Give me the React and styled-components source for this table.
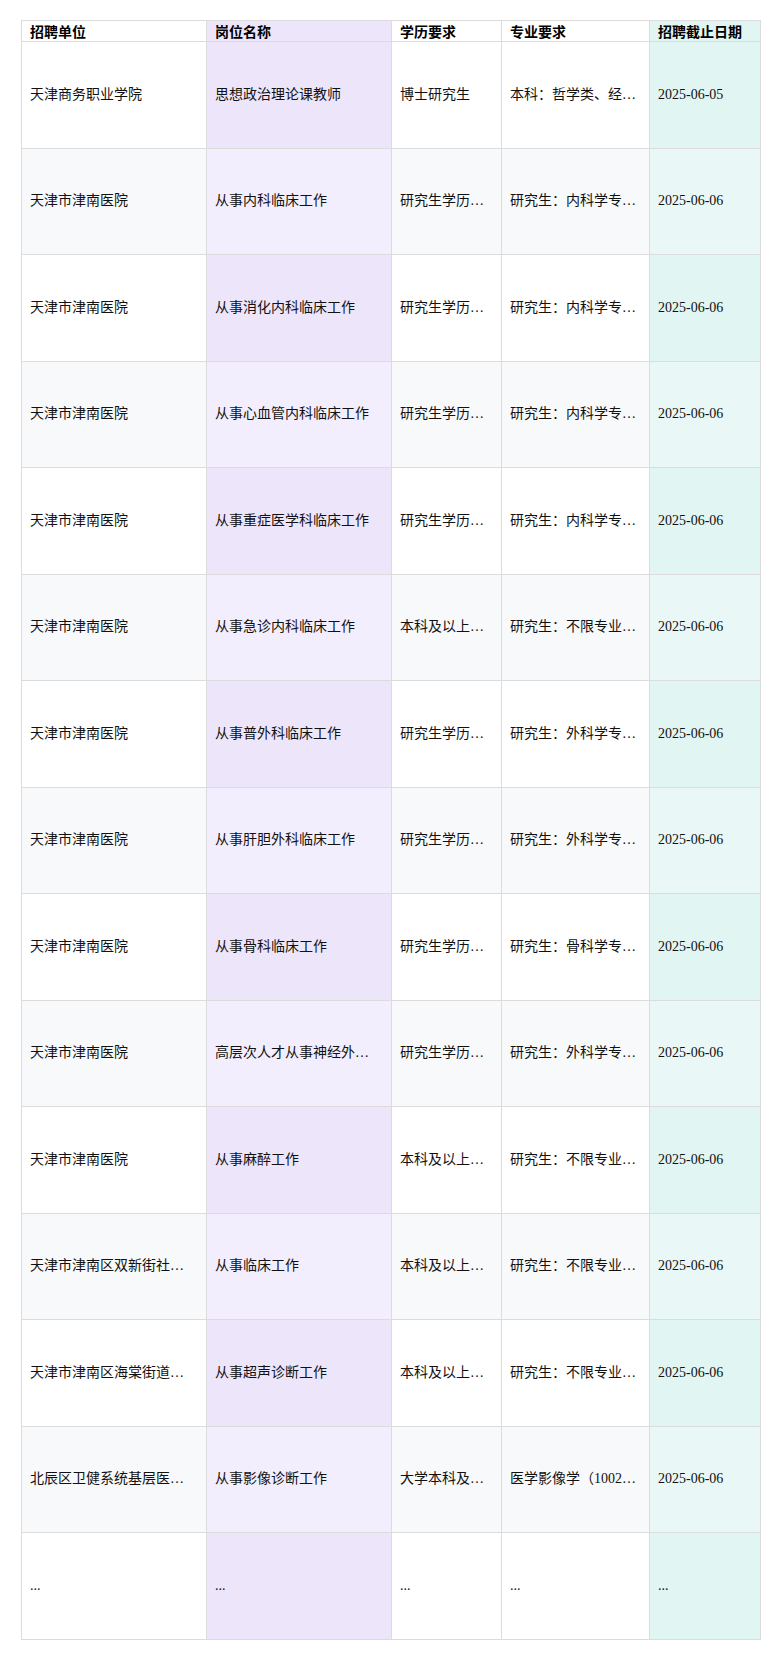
import styled, { createGlobalStyle } from "styled-components";

const GlobalStyle = createGlobalStyle`
  body {
    margin: 0;
    background: #ffffff;
    font-family: "Liberation Serif", "Noto Sans CJK SC", serif;
    color: #111;
  }
`;

const Page = styled.div`
  padding: 20px 20px 20px 21px;
`;

const Table = styled.table`
  width: 739px;
  table-layout: fixed;
  border-collapse: collapse;
  font-size: 14px;
  line-height: 20px;
`;

const stripe = {
  plain: ["#ffffff", "#f8f9fb"],
  job: ["#ede6fb", "#f3eefd"],
  date: ["#e1f5f2", "#e9f8f7"],
};

const HeadCell = styled.th`
  border: 1px solid #dcdcdc;
  padding: 0 8px;
  height: 20px;
  text-align: left;
  font-weight: bold;
  font-family: "Noto Sans CJK SC", sans-serif;
  color: #000;
  background: ${(p) => stripe[p.kind][0]};
`;

const Cell = styled.td`
  border: 1px solid #dcdcdc;
  padding: 0 12px 0 8px;
  height: 105.5px;
  vertical-align: middle;
  white-space: nowrap;
  overflow: hidden;
  text-overflow: ellipsis;
  background: ${(p) => stripe[p.kind][p.odd ? 1 : 0]};
`;

const columns = [
  { title: "招聘单位", width: 185, kind: "plain" },
  { title: "岗位名称", width: 185, kind: "job" },
  { title: "学历要求", width: 110, kind: "plain" },
  { title: "专业要求", width: 148, kind: "plain" },
  { title: "招聘截止日期", width: 111, kind: "date" },
];

const NANYUAN = "天津市津南医院";
const PG = "研究生学历，硕士及以上学位";
const BK = "本科及以上学历，学士及以上学位";

const rows = [
  ["天津商务职业学院", "思想政治理论课教师", "博士研究生", "本科：哲学类、经济学类；研究生：马克思主义理论", "2025-06-05"],
  [NANYUAN, "从事内科临床工作", PG, "研究生：内科学专业（呼吸、肾内方向）", "2025-06-06"],
  [NANYUAN, "从事消化内科临床工作", PG, "研究生：内科学专业（消化方向）", "2025-06-06"],
  [NANYUAN, "从事心血管内科临床工作", PG, "研究生：内科学专业（心血管方向）", "2025-06-06"],
  [NANYUAN, "从事重症医学科临床工作", PG, "研究生：内科学专业、重症医学", "2025-06-06"],
  [NANYUAN, "从事急诊内科临床工作", BK, "研究生：不限专业；本科：临床医学", "2025-06-06"],
  [NANYUAN, "从事普外科临床工作", PG, "研究生：外科学专业（普外方向）", "2025-06-06"],
  [NANYUAN, "从事肝胆外科临床工作", PG, "研究生：外科学专业（肝胆方向）", "2025-06-06"],
  [NANYUAN, "从事骨科临床工作", PG, "研究生：骨科学专业（骨科方向）", "2025-06-06"],
  [NANYUAN, "高层次人才从事神经外科临床工作", PG, "研究生：外科学专业（神经外科方向）", "2025-06-06"],
  [NANYUAN, "从事麻醉工作", BK, "研究生：不限专业；本科：麻醉学", "2025-06-06"],
  ["天津市津南区双新街社区卫生服务中心", "从事临床工作", BK, "研究生：不限专业；本科：临床医学", "2025-06-06"],
  ["天津市津南区海棠街道社区卫生服务中心", "从事超声诊断工作", BK, "研究生：不限专业；本科：医学影像学", "2025-06-06"],
  ["北辰区卫健系统基层医疗卫生机构", "从事影像诊断工作", "大学本科及以上学历", "医学影像学（100203TK）", "2025-06-06"],
  ["...", "...", "...", "...", "..."],
];

export default function App() {
  return (
    <Page>
      <GlobalStyle />
      <Table>
        <colgroup>
          {columns.map((c) => (
            <col key={c.title} style={{ width: c.width }} />
          ))}
        </colgroup>
        <thead>
          <tr>
            {columns.map((c) => (
              <HeadCell key={c.title} kind={c.kind}>
                {c.title}
              </HeadCell>
            ))}
          </tr>
        </thead>
        <tbody>
          {rows.map((r, i) => (
            <tr key={i}>
              {r.map((v, j) => (
                <Cell key={j} kind={columns[j].kind} odd={i % 2 === 1}>
                  {v}
                </Cell>
              ))}
            </tr>
          ))}
        </tbody>
      </Table>
    </Page>
  );
}
